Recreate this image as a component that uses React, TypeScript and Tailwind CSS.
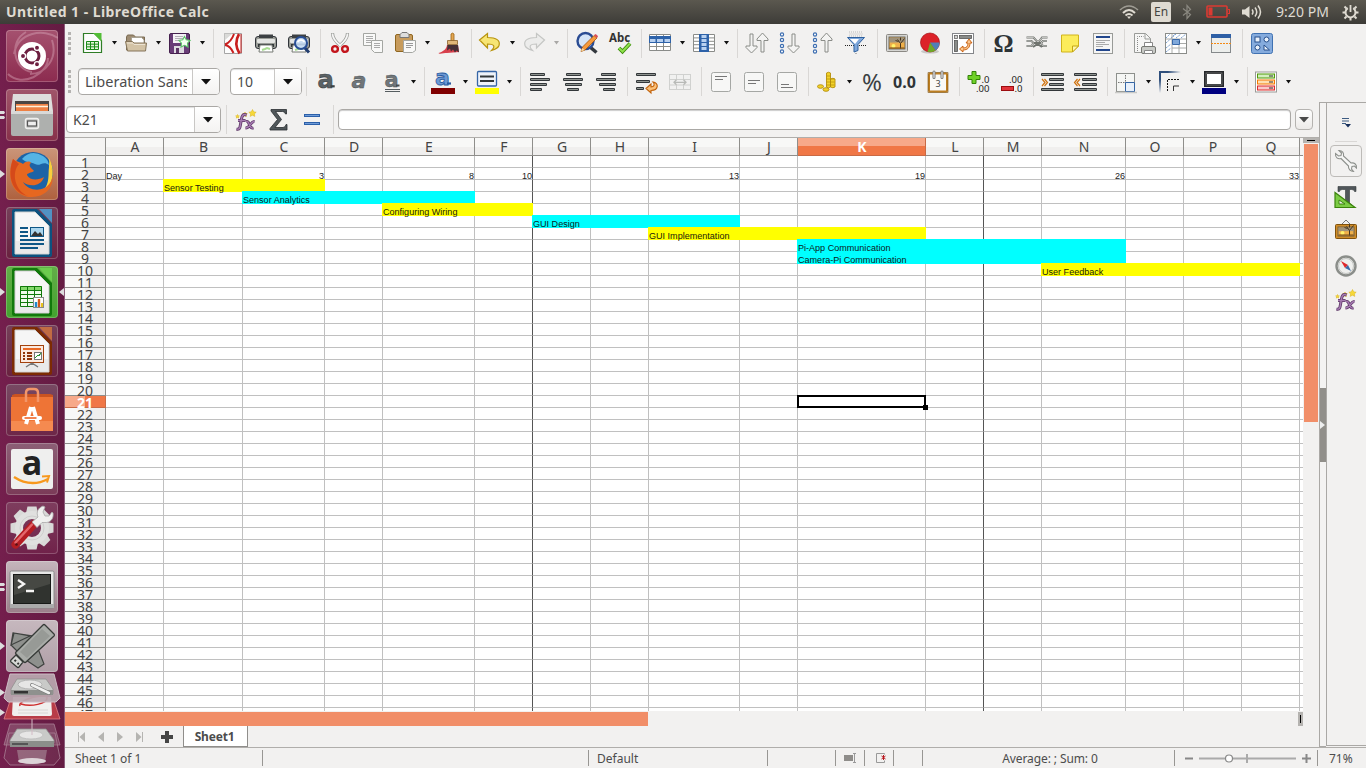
import React from "react";

type Kids = { children?: React.ReactNode };

/* ---------- toolbar icons, 24 x 24 ---------- */

function Svg({ children, s = 24 }: Kids & { s?: number }) {
  return (
    <svg width={s} height={s} viewBox="0 0 24 24" fill="none" className="shrink-0 overflow-visible">
      {children}
    </svg>
  );
}

const UI = "Noto Sans, Open Sans, sans-serif";

const SheetLines = ({ x, y, w, h, c, n = 4, m = 3 }: { x: number; y: number; w: number; h: number; c: string; n?: number; m?: number }) => (
  <g stroke={c} strokeWidth="1">
    {Array.from({ length: n + 1 }, (_, i) => (
      <path key={"h" + i} d={`M${x} ${y + (h * i) / n}h${w}`} />
    ))}
    {Array.from({ length: m + 1 }, (_, i) => (
      <path key={"v" + i} d={`M${x + (w * i) / m} ${y}v${h}`} />
    ))}
  </g>
);

const bars = (rows: number[][]) => (
  <g>
    {rows.map(([x, y, w], i) => (
      <g key={i}>
        <rect x={x} y={y} width={w} height="3" rx="1" fill="#33373a" />
        <rect x={x + 1} y={y + 1} width={w - 2} height="1" fill="#8f9490" />
      </g>
    ))}
  </g>
);

const Box = ({ y1, y2 }: { y1: number; y2: number }) => (
  <g>
    <rect x="2.5" y="2.5" width="19" height="19" rx="2" fill="#f7f7f6" stroke="#a5a7a4" />
    <path d={`M6 ${y1}h12M6 ${y2}h8`} stroke="#777" strokeWidth="1" />
  </g>
);

const ArrowDown = ({ x }: { x: number }) => (
  <path d={`M${x - 1.5} 3v12h-4v1.500l5.500 5.500 5.500-5.500v-1.500h-4v-12z`} fill="#f4f4f3" stroke="#8a8c88" />
);
const ArrowUp = ({ x }: { x: number }) => (
  <path d={`M${x - 1.5} 21v-11.500h-4v-1.500l5.500-6 5.500 6v1.500h-4v11.500z`} fill="#f4f4f3" stroke="#8a8c88" />
);

const Fx = () => (
  <g>
    <path d="M11 4l.8 1.500 1.600.2-1.200 1.200.3 1.600-1.500-.8-1.500.8.3-1.600-1.200-1.200 1.600-.2zM18.500 1.500l1.200 2.300 2.500.4-1.800 1.700.4 2.500-2.300-1.200-2.300 1.200.4-2.500-1.800-1.700 2.500-.4zM3.500 6.500l.6 1.200 1.300.2-1 .9.300 1.300-1.200-.6-1.200.6.3-1.300-1-.9 1.300-.2z" fill="#f6d83a" stroke="#d8b21a" strokeWidth=".5" />
    <path d="M12.500 7c-3.500-1.500-4.500 1-5 4l-1.500 8c-.3 1.800-1.500 2.500-3.500 2M4 12.500h7.500" stroke="#5c3566" strokeWidth="3" />
    <path d="M12.500 7c-3.500-1.500-4.500 1-5 4l-1.500 8c-.3 1.800-1.500 2.500-3.500 2M4 12.500h7.500" stroke="#a77cb2" strokeWidth="1.400" />
    <path d="M12 13.500c4-1.500 2.500 8 7.500 6.500M20.500 13.500c-4-.5-4 6.500-9 6.500" stroke="#5c3566" strokeWidth="2.800" />
    <path d="M12 13.500c4-1.500 2.500 8 7.500 6.500M20.500 13.500c-4-.5-4 6.500-9 6.500" stroke="#a77cb2" strokeWidth="1.300" />
  </g>
);

const Sunset = ({ frame, edge = "#8b8984", x = 1.5, y = 3.5, w = 21, h = 17 }: { frame: string; edge?: string; x?: number; y?: number; w?: number; h?: number }) => (
  <g>
    <rect x={x} y={y} width={w} height={h} rx="1" fill={frame} stroke={edge} />
    <rect x={x + 2.5} y={y + 2.5} width={w - 5} height={h - 5} fill="#efb04a" stroke="#55544f" strokeWidth=".8" />
    <rect x={x + 3} y={y + 3} width={w - 6} height={(h - 6) / 2.2} fill="#85898c" opacity=".75" />
    <circle cx={x + 7} cy={y + h - 5.500} r="2" fill="#fff36b" />
    <path d={`M${x + 14} ${y + h - 3}v-5l-3-4m3 4l4-5m-4 2v-3m-5 3l3 1`} stroke="#45341e" strokeWidth="1" />
    <path d={`M${x + 3} ${y + h - 3.5}h${w - 6}`} stroke="#744a12" strokeWidth="1" />
  </g>
);

const Printer = () => (
  <g>
    <rect x="1.500" y="5.500" width="21" height="12" rx="2.500" fill="#999c97" stroke="#30343a" />
    <rect x="5" y="3.500" width="14" height="3.500" fill="#3c4043" />
    <rect x="3" y="8" width="18" height="4" rx="1" fill="#e4e5e3" />
    <rect x="4" y="13" width="16" height="3" fill="#33383b" />
    <path d="M6 14h12l1 7H5z" fill="#fff" stroke="#777b75" />
    <path d="M8 19l3-1 2-1 3 1" stroke="#a8dc92" strokeWidth="2" />
  </g>
);

const icons: Record<string, React.ReactNode> = {
  calc: (
    <Svg>
      <path d="M3.500 2.500h11l7 7v12h-18z" fill="#fcfcfc" stroke="#2f7d26" strokeWidth="1.200" />
      <path d="M13 2h8.500v8.500z" fill="#52bd36" />
      <rect x="6.500" y="10.500" width="12" height="8" fill="#e5f6dc" />
      <SheetLines x={6.5} y={10.5} w={12} h={8} c="#198b17" n={3} />
    </Svg>
  ),
  open: (
    <Svg>
      <path d="M2.500 19V6l1-2h6l2 2h9v13z" fill="#9f8d73" stroke="#7a6a52" />
      <path d="M7.500 6.500h10l2.500 2.500v5H7.500z" fill="#fff" stroke="#a09a8c" strokeWidth=".8" />
      <path d="M1.500 10.500h7l1.500 1.500h12.500l-1 8h-18z" fill="#d3c3a6" stroke="#85755a" />
      <path d="M3 12h5.500l1.500 1.500h11" stroke="#ece3d2" />
    </Svg>
  ),
  save: (
    <Svg>
      <rect x="1.500" y="2.500" width="20" height="20" rx="1.500" fill="#693d78" stroke="#45204e" />
      <rect x="5" y="3" width="13" height="9" fill="#f5f2f6" />
      <path d="M7 5.500h8M7 7.500h8M7 9.500h5" stroke="#b5b0b8" />
      <rect x="6" y="15" width="10" height="7" fill="#dddbe0" />
      <rect x="8" y="17" width="3" height="5" fill="#5c3566" />
      <path d="M16.500 5.500l1.800 3.300 3.800.6-2.600 2.800.5 3.800-3.500-1.700-3.500 1.700.5-3.800-2.600-2.800 3.800-.6z" fill="#f4fff0" stroke="#5cc468" strokeWidth="1.100" />
    </Svg>
  ),
  pdf: (
    <Svg>
      <path d="M3.500 2.500h17v20h-17z" fill="#fdfdfd" stroke="#a5a5a5" />
      <path d="M3.500 2.500h8l-8 7z" fill="#dadad8" />
      <path d="M4 13.500c4-1.500 7-5 9-10.500M4 14c3.500.5 6.500 3.500 8.500 8" stroke="#c81f1f" strokeWidth="2" />
      <path d="M18 3c-3.500 6-3.500 13 .5 19.500" stroke="#c81f1f" strokeWidth="2.600" />
      <path d="M20 3v19" stroke="#c81f1f" strokeWidth="1" />
    </Svg>
  ),
  print: <Svg><Printer /></Svg>,
  preview: (
    <Svg>
      <Printer />
      <path d="M17 16l5 5.500" stroke="#223d6f" strokeWidth="3" />
      <circle cx="14" cy="12" r="6" fill="#c3daf4" fillOpacity=".85" stroke="#294f96" strokeWidth="2" />
      <path d="M10.500 11q3.500-4 7 0" stroke="#fff" strokeWidth="1.500" />
    </Svg>
  ),
  cut: (
    <Svg>
      <path d="M4.500 2c0 5 3 9 8.500 13M19.500 2c0 5-3 9-8.500 13" stroke="#9a9c98" strokeWidth="3.200" />
      <path d="M4.500 2.500c0 4.500 3 8.500 8.500 12.500M19.500 2.500c0 4.500-3 8.500-8.500 12.500" stroke="#f6f6f6" strokeWidth="1.700" />
      <circle cx="7" cy="18" r="2.900" stroke="#c3151c" strokeWidth="2.400" />
      <circle cx="17" cy="18" r="2.900" stroke="#c3151c" strokeWidth="2.400" />
    </Svg>
  ),
  copy: (
    <Svg>
      <path d="M2.500 2.500h12v12h-12z" fill="#f9f9f8" stroke="#a4a6a2" />
      <path d="M5 5.500h7M5 7.500h7M5 9.500h5M5 11.500h6" stroke="#aaa" />
      <path d="M10.500 9.500h11v12h-8l-3-3z" fill="#f9f9f8" stroke="#a4a6a2" />
      <path d="M13 12.500h6M13 14.500h6M13 16.500h6" stroke="#aaa" />
    </Svg>
  ),
  paste: (
    <Svg>
      <rect x="2.500" y="3.500" width="17" height="17" rx="1.500" fill="#c79b5c" stroke="#8f661f" />
      <path d="M7 3.500l2-2h5l2 2v3H7z" fill="#ddd" stroke="#777" />
      <path d="M10.500 9.500h12v10l-3 2h-9z" fill="#f9f9f8" stroke="#a4a6a2" />
      <path d="M13 12.500h7M13 14.500h7M13 16.500h5" stroke="#999" />
    </Svg>
  ),
  brush: (
    <Svg>
      <path d="M13 3q1.500-1.800 3 0v7h-3z" fill="#e3a651" stroke="#9b6518" strokeWidth=".8" />
      <path d="M9.500 9.500h10v4h-10z" fill="#e0b678" stroke="#8a6128" strokeWidth=".8" />
      <path d="M9 14h11l1 7-12 1c-3 0-8 1.500-8.500 0 5-1.500 8-4 8.500-8z" fill="#d8404c" />
      <path d="M9.500 14H20l1 7.500-2.500-2-1.500 2-2-3-2 2-1-3-3 2z" fill="#463036" />
    </Svg>
  ),
  undo: (
    <Svg>
      <path d="M1.500 9l8-6.500v4c9 0 13 3 11.500 8-1 3-4 4-7.500 5 4-4 3-6.500-4-6.500v4z" fill="#f7e574" stroke="#b8940f" strokeWidth="1.200" />
    </Svg>
  ),
  redo: (
    <Svg>
      <path d="M22.500 9l-8-6.500v4c-9 0-13 3-11.500 8 1 3 4 4 7.500 5-4-4-3-6.500 4-6.500v4z" fill="#ececeb" stroke="#c5c6c4" strokeWidth="1.200" />
    </Svg>
  ),
  find: (
    <Svg>
      <path d="M15 16l6.500 5.500" stroke="#33383e" strokeWidth="3.500" />
      <circle cx="10.500" cy="10" r="8" fill="#d6e5f7" stroke="#2b4c93" strokeWidth="2.400" />
      <path d="M6 20.500l1.500-4.500L19 4.500l3 2.500L10 19z" fill="#f59a3d" stroke="#a65309" strokeWidth=".8" />
      <path d="M19 4.500l3 2.500 1-1.500q-.5-2-2.800-2.500z" fill="#db4f58" />
      <path d="M6 20.500l1.200-3.500 2.500 2z" fill="#f4d9a8" />
    </Svg>
  ),
  abc: (
    <Svg>
      <text x="1" y="11" fontSize="11.500" fontWeight="700" fontFamily={UI} fill="#333">Abc</text>
      <path d="M11 17l3.500 3.500 7.500-8" stroke="#3b8a0a" strokeWidth="3.800" />
      <path d="M11 17l3.500 3.500 7.500-8" stroke="#8ee04b" strokeWidth="2" />
    </Svg>
  ),
  rows: (
    <Svg>
      <rect x="1.500" y="3.500" width="21" height="16" fill="#fff" />
      <SheetLines x={1.5} y={3.5} w={21} h={16} c="#8a8c89" n={4} />
      <rect x="1" y="5" width="22" height="7" fill="#2d62a9" />
      <path d="M2 9.500h5.500M9 9.500h6M16.500 9.500H22" stroke="#b7d0f0" strokeWidth="3" />
    </Svg>
  ),
  cols: (
    <Svg>
      <rect x="1.500" y="3.500" width="21" height="17" fill="#fff" />
      <SheetLines x={1.5} y={3.5} w={21} h={17} c="#8a8c89" n={5} />
      <rect x="7" y="3" width="10" height="18" fill="#2d62a9" />
      <path d="M9.500 5.500h5M9.500 9.500h5M9.500 13.500h5M9.500 17.500h5" stroke="#b7d0f0" strokeWidth="2.800" />
    </Svg>
  ),
  sort: <Svg><ArrowDown x={6.5} /><ArrowUp x={17.5} /></Svg>,
  sortDown: (
    <Svg>
      <g stroke="#3c6db0" strokeWidth="1.200" fill="#fff">{[3.5, 9, 15, 20.5].map((y) => <circle key={y} cx="4" cy={y} r="1.600" />)}</g>
      <ArrowDown x={15.5} />
    </Svg>
  ),
  sortUp: (
    <Svg>
      <g stroke="#3c6db0" strokeWidth="1.200" fill="#fff">{[3.5, 9, 15, 20.5].map((y) => <circle key={y} cx="4" cy={y} r="1.600" />)}</g>
      <ArrowUp x={15.5} />
    </Svg>
  ),
  filter: (
    <Svg>
      <path d="M5 1h14M5.500 3h14M5 5h14" stroke="#bbb" strokeWidth="1" strokeDasharray="1 1" />
      <path d="M1 14.500h22" stroke="#222" strokeDasharray="1 1" />
      <path d="M3.500 6.500h17l-6.500 7v6l-4 1.500v-7.500z" fill="#7fa8dc" stroke="#2f619f" />
      <path d="M6 8h9l-4 5z" fill="#fff" />
      <path d="M12 22v2" stroke="#777" strokeDasharray="1 1" />
    </Svg>
  ),
  image: <Svg><Sunset frame="#d6d6d3" /></Svg>,
  chart: (
    <Svg>
      <ellipse cx="12" cy="20.500" rx="9" ry="2" fill="#c9c9c7" />
      <circle cx="12" cy="11.500" r="9.500" fill="#dc2229" stroke="#a40f12" strokeWidth=".7" />
      <path d="M12 11.500h9.500c0 4-1.500 6-4 8z" fill="#517fb8" />
      <path d="M12 11.500l5.500 8c-3 1.800-5 1.800-8 1.200z" fill="#6fa82a" />
    </Svg>
  ),
  pivot: (
    <Svg>
      <rect x="1.500" y="2.500" width="21" height="20" fill="#fff" stroke="#84868a" />
      <rect x="3.500" y="4.500" width="3" height="3" fill="#d4d4d2" stroke="#666" strokeWidth=".8" />
      <rect x="8.500" y="4.500" width="12" height="3" fill="#8a8c89" stroke="#555" strokeWidth=".8" />
      <rect x="3.500" y="9.500" width="3" height="11" fill="#8a8c89" stroke="#555" strokeWidth=".8" />
      <path d="M8.500 18l3.500-3v2c3.500 0 5-1.500 5-5h-2l3-4 3 4h-2c0 4.500-2.500 7-7 7v2z" fill="#fbc78e" stroke="#c55a09" strokeWidth=".9" />
    </Svg>
  ),
  omega: (
    <Svg>
      <text x="11.500" y="21" textAnchor="middle" fontSize="25" fontWeight="700" fontFamily="Liberation Serif, serif" fill="#2d3336">Ω</text>
    </Svg>
  ),
  link: (
    <Svg>
      <path d="M1.500 6.500h7l3.500 4h2l3-4h5.500M1.500 10h5l2 2-2 3h-5M22 10h-4l-2 2 2 3h4M8.500 12h7M8 16l3-2h3l3 2" stroke="#70746f" strokeWidth="2" />
      <path d="M1.500 6.500h7l3.500 4h2l3-4h5.500M1.500 10h5l2 2-2 3h-5M22 10h-4l-2 2 2 3h4" stroke="#d5d6d4" strokeWidth=".8" />
    </Svg>
  ),
  note: (
    <Svg>
      <path d="M3.500 4h17v11l-6 6h-11z" fill="#fcec5b" stroke="#d0b31b" />
      <path d="M14.500 21v-6h6z" fill="#fff6a8" stroke="#c4a613" />
    </Svg>
  ),
  header: (
    <Svg>
      <rect x="2.500" y="2.500" width="19" height="20" fill="#f5f5f4" stroke="#999b98" />
      <path d="M5 6h14M5 19h14" stroke="#22468c" strokeWidth="2.200" />
      <path d="M5 9.500h14M5 11.500h9M5 13.500h13M5 15.500h7" stroke="#aaa" />
    </Svg>
  ),
  printArea: (
    <Svg>
      <path d="M2.500 2.500h11l5 5v14h-16z" fill="#f6f6f5" stroke="#999b98" />
      <path d="M13 2.500v5.500h5.500" stroke="#999b98" />
      <path d="M5.500 20V5.500h6" stroke="#888" strokeDasharray="1 1" />
      <path d="M12.500 11.500h8v5h-8z" fill="#fff" stroke="#888" />
      <rect x="9.500" y="15.500" width="14" height="7" rx="1.500" fill="#c9cbc7" stroke="#777974" />
      <path d="M12.500 19.500h8v3h-8z" fill="#fff" stroke="#888" />
    </Svg>
  ),
  freeze: (
    <Svg>
      <rect x="1.500" y="2.500" width="21" height="20" fill="#fff" stroke="#8a8c89" />
      <path d="M2 7l4-4M2 12l10-9M2 17l5-4M2 21l5-4M12 7l5-4M17 7l5-4M7 7l4-4" stroke="#7ba0d0" strokeDasharray="2 1" />
      <path d="M8 3v19M2 8h20M15 8v14M8 12.500h14M8 17h14" stroke="#aaacaa" />
      <path d="M8.500 8.500h7v5h-7z" fill="#7fa8da" stroke="#3a69a8" />
    </Svg>
  ),
  split: (
    <Svg>
      <rect x="2.500" y="3.500" width="19" height="18" fill="#eceeec" stroke="#85898b" />
      <path d="M2 5h20" stroke="#2e5fa5" strokeWidth="4" />
      <path d="M2 12.500h20" stroke="#f48a13" strokeWidth="1" strokeDasharray="2 1" />
    </Svg>
  ),
  shapes: (
    <Svg>
      <rect x="1.500" y="2.500" width="21" height="20" rx="2" fill="#85abdd" stroke="#4072b2" />
      <g fill="#e9f1fb" stroke="#264f8c" strokeWidth="1">
        <rect x="5" y="6" width="5" height="5" />
        <circle cx="16.500" cy="8.500" r="2.500" />
        <circle cx="7.500" cy="16.500" r="2.500" />
        <path d="M14 14v5h5.500z" />
      </g>
    </Svg>
  ),
  bold: (
    <Svg>
      <text x="11.500" y="17.500" textAnchor="middle" fontSize="24" fontWeight="700" fontFamily="DejaVu Sans, sans-serif" fill="#5c6366" stroke="#3a4043" strokeWidth=".6">a</text>
      <path d="M16.500 16.300h4.200" stroke="#3a4043" strokeWidth="2.200" />
    </Svg>
  ),
  italic: (
    <Svg>
      <text x="12" y="17.500" textAnchor="middle" fontSize="22" fontWeight="700" fontStyle="italic" fontFamily="DejaVu Sans, sans-serif" fill="#70767a" stroke="#454b4e" strokeWidth=".4">a</text>
    </Svg>
  ),
  underline: (
    <Svg>
      <text x="12.500" y="16.500" textAnchor="middle" fontSize="21" fontWeight="700" fontFamily="DejaVu Sans, sans-serif" fill="#70767a" stroke="#454b4e" strokeWidth=".4">a</text>
      <path d="M17 15.500h3.500" stroke="#454b4e" strokeWidth="2" />
      <path d="M6 19.500h15M6 21.500h15" stroke="#565d60" strokeWidth="1.100" />
    </Svg>
  ),
  fontColor: (
    <Svg>
      <text x="11.500" y="14.500" textAnchor="middle" fontSize="22" fontWeight="700" fontFamily="DejaVu Sans, sans-serif" fill="#6b99d4" stroke="#295a9f" strokeWidth=".8">a</text>
      <path d="M16 13.500h4" stroke="#295a9f" strokeWidth="2.200" />
      <rect x="0" y="18" width="24" height="6" fill="#800000" />
    </Svg>
  ),
  highlight: (
    <Svg>
      <rect x="2.500" y="1.500" width="19" height="14.500" rx="1" fill="#eef3fa" stroke="#3565a6" strokeWidth="1.300" />
      <path d="M5 6.500h14M5 11h14" stroke="#33393b" strokeWidth="2" />
      <rect x="0" y="18" width="24" height="6" fill="#ff0" />
    </Svg>
  ),
  left: <Svg>{bars([[2, 3, 15], [2, 8, 20], [2, 13, 17], [2, 18, 12]])}</Svg>,
  center: <Svg>{bars([[5, 3, 15], [2, 8, 20], [4, 13, 17], [6, 18, 12]])}</Svg>,
  right: <Svg>{bars([[7, 3, 15], [2, 8, 20], [5, 13, 17], [9, 18, 12]])}</Svg>,
  wrap: (
    <Svg>
      {bars([[1, 3, 20], [1, 10, 14], [1, 17, 8]])}
      <path d="M11 18.500l5-4.500v3c3.500 0 4-3 2-5 6 .5 6 8.500-2 8.500v2.500z" fill="#fbc078" stroke="#c3630b" strokeWidth="1.100" />
    </Svg>
  ),
  merge: (
    <Svg>
      <rect x="1.500" y="4.500" width="21" height="15" fill="#f1f1f0" stroke="#d0d1cf" />
      <path d="M8.500 4v6M15.500 4v6M8.500 15v5M15.500 15v5M1 9.500h22M1 15h22" stroke="#d0d1cf" />
      <path d="M6 12.300h12M8.500 9.800l-2.500 2.500 2.500 2.500M15.500 9.800l2.500 2.500-2.500 2.500" stroke="#b8bab7" strokeWidth="1.300" />
    </Svg>
  ),
  top: <Svg><Box y1={6.5} y2={9.5} /></Svg>,
  middle: <Svg><Box y1={10.5} y2={13.5} /></Svg>,
  bottom: <Svg><Box y1={17.5} y2={14.5} /></Svg>,
  currency: (
    <Svg>
      <g fill="#f2d229" stroke="#b58f0c" strokeWidth=".9">
        <path d="M11.500 3q2-1.500 4 0v14q-2 1.500-4 0zM15.500 9q2.500-1.500 4.500 0v8q-2 1.500-4.500 0z" />
        <ellipse cx="5.500" cy="16.500" rx="3" ry="1.800" />
        <ellipse cx="11" cy="19.500" rx="3" ry="1.800" />
      </g>
      <path d="M11.500 6h4M11.500 9h8M11.500 12h8M11.500 15h8" stroke="#b58f0c" strokeWidth=".7" />
    </Svg>
  ),
  percent: (
    <Svg>
      <text x="12" y="20.500" textAnchor="middle" fontSize="24" fontFamily={UI} fill="#3a4043">%</text>
    </Svg>
  ),
  number: (
    <Svg>
      <text x="11.500" y="17.500" textAnchor="middle" fontSize="16" fontWeight="700" fontFamily={UI} fill="#2f3436">0.0</text>
    </Svg>
  ),
  date: (
    <Svg>
      <rect x="3" y="3.500" width="18" height="18" rx="1" fill="#faf9f6" stroke="#bd7f22" strokeWidth="2" />
      <path d="M2 2.500h20v20h-20z" stroke="#7d5211" strokeWidth=".6" />
      <text x="12" y="16.500" textAnchor="middle" fontSize="9" fontFamily={UI} fill="#444">3</text>
      <path d="M8 2v5.500M16 2v5.500" stroke="#777" strokeWidth="3" strokeLinecap="round" />
      <path d="M8 2v5.500M16 2v5.500" stroke="#ddd" strokeWidth="1.300" strokeLinecap="round" />
    </Svg>
  ),
  addDec: (
    <Svg>
      <path d="M5 1.500h4v4h4v4H9v4H5v-4H1v-4h4z" fill="#6fd128" stroke="#348208" />
      <text x="14.500" y="12.500" fontSize="9.500" fontFamily={UI} fill="#222">.0</text>
      <text x="9" y="22" fontSize="9.500" fontFamily={UI} fill="#222">.00</text>
    </Svg>
  ),
  delDec: (
    <Svg>
      <rect x="1.500" y="16.500" width="12" height="4" fill="#e2343a" stroke="#9c0d10" />
      <text x="9" y="12.500" fontSize="9.500" fontFamily={UI} fill="#222">.00</text>
      <text x="14.500" y="22" fontSize="9.500" fontFamily={UI} fill="#222">.0</text>
    </Svg>
  ),
  indent: (
    <Svg>
      {bars([[0, 3, 23], [8, 8, 15], [8, 13, 15], [0, 18, 23]])}
      <path d="M1 9l3 3.500-3 3.500M3.500 9l3 3.500-3 3.500" stroke="#d0730f" strokeWidth="1.200" />
    </Svg>
  ),
  outdent: (
    <Svg>
      {bars([[0, 3, 23], [8, 8, 15], [8, 13, 15], [0, 18, 23]])}
      <path d="M6 9l-3 3.500 3 3.500M3.500 9l-3 3.500 3 3.500" stroke="#d0730f" strokeWidth="1.200" />
    </Svg>
  ),
  border: (
    <Svg>
      <rect x="2.500" y="3.500" width="18" height="18" fill="#f5f6f4" stroke="#8d908c" />
      <path d="M4 12.500h8M11.500 5v8" stroke="#777" strokeDasharray="1.500 1" />
      <path d="M11.500 12.500h9v9h-9z" fill="#e8f0fa" stroke="#3465a4" />
      <path d="M1 22.500h22" stroke="#c9c9c7" strokeWidth="1.500" />
    </Svg>
  ),
  lineStyle: (
    <Svg>
      <defs>
        <linearGradient id="fadeX" x1="0" x2="1"><stop offset=".4" stopColor="#2f4f7c" /><stop offset="1" stopColor="#2f4f7c" stopOpacity="0" /></linearGradient>
        <linearGradient id="fadeY" x1="0" x2="0" y1="0" y2="1"><stop offset=".4" stopColor="#2f4f7c" /><stop offset="1" stopColor="#2f4f7c" stopOpacity="0" /></linearGradient>
      </defs>
      <rect x="1" y="1" width="22" height="2" fill="url(#fadeX)" />
      <rect x="1" y="1" width="2" height="22" fill="url(#fadeY)" />
      <path d="M9.500 21V9.500H22" stroke="#111" strokeWidth="1" strokeDasharray="2 1" />
      <path d="M15.500 21v-5H21" stroke="#333" strokeWidth="1" />
    </Svg>
  ),
  lineColor: (
    <Svg>
      <rect x="3.500" y="2.500" width="17" height="13" fill="#fff" stroke="#26282a" strokeWidth="3" />
      <rect x="4" y="3" width="16" height="12" stroke="#777" strokeWidth=".8" />
      <rect x="0" y="18" width="24" height="6" fill="#000080" />
    </Svg>
  ),
  cond: (
    <Svg>
      <rect x="1.500" y="2" width="21" height="20" fill="#fff" stroke="#999b98" />
      <rect x="3.500" y="4" width="17" height="4" fill="#d3efc0" stroke="#4e9a06" />
      <rect x="3.500" y="10" width="17" height="4" fill="#fde0b4" stroke="#f57900" />
      <rect x="3.500" y="16" width="17" height="4" fill="#f9c9c9" stroke="#dd2a2a" />
      <path d="M15 6h4M15 12h4M15 18h4" stroke="#333" />
    </Svg>
  ),
  fx: <Svg><Fx /></Svg>,
  sigma: (
    <Svg>
      <path d="M4 1.500h15.500v4.500h-1q-.5-2.500-3-2.500H8.500l6 8-6.500 8h8q2.500 0 3-3h1v5.500H3v-1.500l7.500-9L4 3z" fill="#50575a" stroke="#2a2f31" strokeWidth=".8" />
    </Svg>
  ),
  equals: (
    <Svg>
      <path d="M4 7.500h16M4 15.500h16" stroke="#2c60a9" strokeWidth="3" />
      <path d="M5 7.500h14M5 15.500h14" stroke="#6f9cd8" />
    </Svg>
  ),
};

const Grip = () => (
  <div className="ml-[3px] flex w-[3px] flex-col gap-[2px]">
    {[0, 1, 2, 3, 4].map((i) => <div key={i} className="h-[3px] bg-[#b4b2b0]" />)}
  </div>
);
const Sep = () => (
  <div className="flex w-2 shrink-0 justify-center pl-px">
    <div className="h-[29px] w-px bg-[#d9d7d5]" />
  </div>
);
const Tri = ({ dim }: { dim?: boolean }) => (
  <svg width="5" height="4" viewBox="0 0 5 4" className="shrink-0">
    <path d="M0 0h5L2.500 3.500z" fill={dim ? "#a9a8a6" : "#111"} />
  </svg>
);
/* "name" is a plain button, "name+" has a drop-down arrow, "|" is a separator */
const Tools = ({ list }: { list: string }) => (
  <>
    {list.split(" ").map((t, i) =>
      t === "|" ? (
        <Sep key={i} />
      ) : t.endsWith("+") ? (
        <div key={i} className="flex w-11 shrink-0 items-center gap-[8px] pl-[3px]">
          {icons[t.slice(0, -1)]}
          <Tri dim={t === "redo+"} />
        </div>
      ) : (
        <div key={i} className="flex w-[33px] shrink-0 items-center pl-[4px]">{icons[t]}</div>
      )
    )}
  </>
);

const BigTri = ({ c = "#111" }: { c?: string }) => (
  <svg width="10" height="6" viewBox="0 0 10 6"><path d="M0 0h10L5 5.500z" fill={c} /></svg>
);
const Combo = ({ text, className, btn }: { text: string; className: string; btn: string }) => (
  <div className={"flex h-[27px] shrink-0 overflow-hidden rounded-[4px] border border-[#aaa8a5] bg-white shadow-[inset_0_1px_1px_#ddd] " + className}>
    <div className="flex min-w-0 flex-1 items-center pl-[6px]">
      <div className="overflow-hidden whitespace-nowrap text-[#4c4c4c]">{text}</div>
    </div>
    <div className={"flex shrink-0 items-center justify-center border-l border-[#c9c7c5] bg-gradient-to-b from-white to-[#f4f3f2] " + btn}><BigTri /></div>
  </div>
);

/* ---------- launcher ---------- */

const OfficePage = ({ a, b, children }: { a: string; b: string } & Kids) => (
  <svg width="52" height="52" viewBox="0 0 52 52">
    <path d="M8 2h23l15 15v31q0 2-2 2H8q-2 0-2-2V4q0-2 2-2z" fill={b} />
    <path d="M33 2h13v14z" fill={a} opacity=".85" />
    <path d="M9 5h20l14 14v28H9z" fill="#f6f6f6" stroke="#d0d0d0" />
    <path d="M9 34h34v13H9z" fill="#dedede" opacity=".5" />
    {children}
  </svg>
);
const Big = ({ children }: Kids) => <svg width="52" height="52" viewBox="0 0 52 52" fill="none">{children}</svg>;

const teeth = [0, 45, 90, 135, 180, 225, 270, 315];

const tiles: { bg: string; marks?: number; icon: React.ReactNode }[] = [
  {
    bg: "bg-gradient-to-b from-[#a5516f] to-[#8c2b4f]",
    icon: (
      <Big>
        <path d="M52 8C38-2 12 2 8 24M2 44C16 58 42 44 42 28M20 2C2 12 8 40 26 42M46 10c6 18-6 34-22 34" stroke="#d8a3b5" strokeOpacity=".45" strokeWidth="2" />
        <circle cx="26" cy="26" r="14" fill="#fff" />
        <circle cx="26" cy="26" r="7" stroke="#6d1f40" strokeWidth="3" />
        <g stroke="#fff" strokeWidth="1.300" fill="#6d1f40">
          <circle cx="17" cy="26" r="2.600" /><circle cx="31" cy="17.800" r="2.600" /><circle cx="31" cy="34.200" r="2.600" />
        </g>
      </Big>
    ),
  },
  {
    bg: "bg-gradient-to-b from-[#a0556a] to-[#87304a]", marks: 2,
    icon: (
      <Big>
        <path d="M7 5h38l2 17H5z" fill="#dededc" />
        <path d="M9 12h34v11H9z" fill="#4b4643" />
        <path d="M10 15h32v7H10z" fill="#ed8144" /><path d="M10 17.500h32" stroke="#fff2da" strokeWidth="1.300" />
        <path d="M5 22h42v23q0 2-2 2H7q-2 0-2-2z" fill="#aeb0ae" />
        <path d="M5 22h42v3H5z" fill="#d9d9d8" />
        <rect x="19.500" y="29.500" width="13" height="10" rx="2" fill="#c4c5c3" stroke="#efefee" strokeWidth="1.500" />
        <rect x="21.500" y="32" width="9" height="5" fill="#eee" stroke="#555" strokeWidth="1.200" />
      </Big>
    ),
  },
  {
    bg: "bg-gradient-to-b from-[#cb9579] to-[#ae613e]", marks: 1,
    icon: (
      <Big>
        <circle cx="27" cy="24" r="20" fill="#1c63a6" />
        <path d="M16 11q9-10 21-3 5 3 6 9c-6-5-9 2-14-1s-7 0-13-5z" fill="#55b4e5" />
        <path d="M42 9c7 9 7 27-5 34 7-8 5-16 6-24 0-4 1-6-1-10z" fill="#f9cf3c" />
        <path d="M7 11c3 3 6 2 10 5 3-3 7-3 8-1-4 3 2 6 3 8-3 2-7 2-7 4 3 6 12 5 17 2-3 10-15 10-21 5 5 9 20 11 27 1 4-5 3-12 1-16 6 16-3 30-19 30C8 49-1 31 7 11z" fill="#e66720" />
        <path d="M7 11C1 28 6 45 22 48 9 43 5 25 13 16z" fill="#d54a1a" />
      </Big>
    ),
  },
  {
    bg: "bg-gradient-to-b from-[#754059] to-[#69213f]",
    icon: (
      <OfficePage a="#4ba1d6" b="#0c527f">
        <path d="M14 21h8M14 25h8M14 29h8M14 33h24M14 37h24M14 41h18" stroke="#0f5786" strokeWidth="2" />
        <rect x="24.500" y="20.500" width="13" height="9" fill="#abd6ee" stroke="#0f5786" />
        <path d="M25 29l4-5 3 3 2-2 3 4z" fill="#333" />
      </OfficePage>
    ),
  },
  {
    bg: "bg-gradient-to-b from-[#63ae48] to-[#43a22f]", marks: 3,
    icon: (
      <OfficePage a="#6ed150" b="#11790b">
        <rect x="14" y="20" width="22" height="20" fill="#f1fbec" />
        <path d="M14 20h22v5H14z" fill="#84d96c" />
        <SheetLines x={14.5} y={20.5} w={21} h={20} c="#11790b" n={5} m={3} />
        <rect x="27.500" y="31.500" width="10" height="10" fill="#fff" stroke="#888" />
        <path d="M30 41v-5" stroke="#2089ca" strokeWidth="2.400" /><path d="M33 41v-8" stroke="#d65a18" strokeWidth="2.400" /><path d="M36 41v-4" stroke="#e7c31b" strokeWidth="2" />
      </OfficePage>
    ),
  },
  {
    bg: "bg-gradient-to-b from-[#754059] to-[#69213f]",
    icon: (
      <OfficePage a="#cf743f" b="#7c2b03">
        <rect x="14.500" y="20.500" width="23" height="17" fill="#fbeae0" stroke="#a3420d" />
        <path d="M17 24h18" stroke="#ea6a26" strokeWidth="2" />
        <path d="M17 28h2M17 31h2M17 34h2M21 28h5M21 31h5M21 34h5" stroke="#8f3509" strokeWidth="2" />
        <rect x="28.500" y="27.500" width="7" height="7" fill="#fff" stroke="#777" /><path d="M29 33l3-3 1 1 2-3" stroke="#259a2b" />
        <path d="M26 38v2M26 38l-6 4M26 38l6 4" stroke="#777" strokeWidth="1.500" />
      </OfficePage>
    ),
  },
  {
    bg: "bg-gradient-to-b from-[#774963] to-[#6d2648]",
    icon: (
      <Big>
        <path d="M6 11l3-1h35l3 1v3H6z" fill="#c95321" />
        <path d="M5 13h42v34H5z" fill="#ee7436" /><path d="M5 37h42v10H5z" fill="#f58a50" />
        <path d="M20 18v-9q0-4 4-4h4q4 0 4 4v9" stroke="#f2966a" strokeWidth="2.500" />
        <path d="M25 23l-5 17M27 23l5 17" stroke="#fff" strokeWidth="4" />
        <path d="M18 34h16" stroke="#fff" strokeWidth="4" strokeLinecap="round" /><path d="M18.500 34h12" stroke="#ee5a18" strokeWidth="1.500" />
      </Big>
    ),
  },
  {
    bg: "bg-gradient-to-b from-[#8c5f76] to-[#7b3b58]",
    icon: (
      <Big>
        <rect x="5" y="6" width="42" height="40" rx="2" fill="#efefee" />
        <text x="26" y="32" textAnchor="middle" fontSize="34" fontWeight="700" fontFamily="Open Sans, sans-serif" fill="#222">a</text>
        <path d="M8 34q17 11 34 2" stroke="#f7981d" strokeWidth="2.500" /><path d="M36 33.500l7-.5-2 6.500" stroke="#f7981d" strokeWidth="2" />
      </Big>
    ),
  },
  {
    bg: "bg-gradient-to-b from-[#7e3d5e] to-[#70224a]",
    icon: (
      <Big>
        <g fill="#d9d9d8">
          {teeth.map((a) => <path key={a} d="M20 11l1.500-6.500h9L32 11z" transform={`rotate(${a} 26 26)`} />)}
        </g>
        <circle cx="26" cy="26" r="13" stroke="#e0e0df" strokeWidth="8" />
        <circle cx="26" cy="26" r="12" stroke="#cfcfce" strokeWidth="1" />
        <path d="M9.500 42.500L28 22" stroke="#b51d23" strokeWidth="8" strokeLinecap="round" />
        <path d="M9.500 40.500L26 22.500" stroke="#e4666b" strokeWidth="2.500" strokeLinecap="round" />
        <circle cx="10.500" cy="42.500" r="1.300" fill="#571015" />
        <path d="M26 20l6-5c-2-5 0-9 5-11l2 1-2 5 2 4 4 0 3-4 1 1c1 6-3 10-8 9.500l-3 0-5 5z" fill="#f0f0ef" stroke="#aaa" strokeWidth=".8" />
      </Big>
    ),
  },
  {
    bg: "bg-gradient-to-b from-[#c5b6bc] to-[#9b7f8a]", marks: 2,
    icon: (
      <Big>
        <rect x="4" y="10" width="44" height="37" rx="1.500" fill="#e7e7e6" stroke="#888" />
        <path d="M4 43h44v4H4z" fill="#aaa" />
        <rect x="7.500" y="13.500" width="37" height="29" fill="#30332f" stroke="#171917" />
        <path d="M8 14h36v9L8 34z" fill="#555752" opacity=".6" />
        <path d="M12 19l6 4-6 4" stroke="#f5f5f4" strokeWidth="2.300" /><path d="M20 30h8" stroke="#f5f5f4" strokeWidth="2.300" />
      </Big>
    ),
  },
  {
    bg: "bg-gradient-to-b from-[#c6b8be] to-[#b09fa7]", marks: 1,
    icon: (
      <Big>
        <path d="M8 13l16 3-19 9zM5 25l2-12 20 3 11 28-6 4-12-8z" fill="#8e908d" stroke="#3f4240" strokeWidth="1.200" />
        <path d="M37 5q1-1 2 0l9 9q1 1 0 2L20 42q-1 1-2 0l-8-8q-1-1 0-2z" fill="#a9aca8" stroke="#373b38" strokeWidth="1.300" />
        <path d="M36 9l8 7-23 22-7-6z" fill="#979a96" />
        <path d="M10 35l7 7-4 5q-1 1-2 0l-6-5q-1-1 0-2z" fill="#d5d6d3" stroke="#373b38" strokeWidth="1.300" />
        <path d="M8.500 40l1.500 1.300M11.500 43l1.300 1.200" stroke="#333" strokeWidth="2" />
      </Big>
    ),
  },
];

const Marks = ({ n }: { n?: number }) => (
  <div className="flex w-[6px] shrink-0 flex-col justify-center gap-[2px]">
    {n === 2 && [0, 1].map((i) => (
      <svg key={i} width="5" height="3" viewBox="0 0 5 3"><path d="M0 0h4l1 1.500-1 1.500H0z" fill="#ddd" /></svg>
    ))}
    {(n === 1 || n === 3) && <svg width="5" height="8" viewBox="0 0 5 8"><path d="M0 0l5 4-5 4z" fill="#ddd" /></svg>}
  </div>
);

const Launcher = () => (
  <div className="flex w-[65px] shrink-0 flex-col overflow-hidden border-r border-[#8b5c7a] bg-gradient-to-r from-[#741f4d] to-[#641b42] pt-[6px]">
    {tiles.map((t, i) => (
      <div key={i} className="mb-[7px] flex h-[52px] shrink-0">
        <Marks n={t.marks} />
        <div className={"h-[52px] w-[52px] overflow-hidden rounded-[4px] shadow-[inset_0_0_0_1px_rgba(255,255,255,0.22)] " + t.bg}>{t.icon}</div>
        {t.marks === 3 && (
          <div className="flex flex-1 items-center justify-end"><svg width="5" height="8" viewBox="0 0 5 8"><path d="M5 0L0 4l5 4z" fill="#ddd" /></svg></div>
        )}
      </div>
    ))}
    <svg width="64" height="95" viewBox="0 0 64 95" fill="none" className="-mt-[6px] shrink-0">
      <path d="M4 46h56L54 28H10z" fill="#b83c48" stroke="#df8288" strokeWidth=".8" />
      <path d="M13 24h38l1 17q0 2-2 2H14q-2 0-2-2z" fill="#f1efee" />
      <path d="M20 33c-3-6 27-14 27-8s-16 9-26 6" stroke="#ce2d2d" strokeWidth="1.500" />
      <path d="M18 37h30M18 40h30" stroke="#d8d6d5" />
      <path d="M10 1h44l6 24-4 4H8l-4-4z" fill="#b8a5ae" fillOpacity=".95" stroke="#cdbcc5" />
      <path d="M17 6h29l7 10v5H11v-5z" fill="#c9cac8" stroke="#8f918e" strokeWidth=".8" />
      <path d="M11 17h42v5H11z" fill="#8f918e" /><path d="M14 18h14v2.500H14z" fill="#333" />
      <ellipse cx="30" cy="11.500" rx="12" ry="4.500" fill="#e6e6e5" stroke="#aaa" strokeWidth=".8" />
      <path d="M32 12l17 8" stroke="#777" strokeWidth="4" strokeLinecap="round" /><path d="M32 12l17 8" stroke="#f1f1f0" strokeWidth="2.600" strokeLinecap="round" />
      <path d="M10 51h44l6 21H4z" fill="#93607a" fillOpacity=".6" stroke="#a87f94" strokeWidth=".8" />
      <path d="M17 77h30l-2 12q-13 4-26 0z" fill="#a98d9a" fillOpacity=".7" />
      <path d="M9 60h46l5 25-6 7H10l-6-7z" fill="#8b5870" fillOpacity=".25" stroke="#a87f94" strokeWidth=".8" />
      <path d="M17 56h29l8 11v3H10v-3z" fill="#c9cac8" stroke="#8f918e" strokeWidth=".8" /><path d="M10 68h44v6H10z" fill="#8b8e8a" /><path d="M12 70h16v2H12z" fill="#555" />
      <ellipse cx="31" cy="62" rx="12" ry="4" fill="#e6e6e5" stroke="#bbb" strokeWidth=".8" />
      <path d="M32 46v16" stroke="#d3bac5" />
      <ellipse cx="32" cy="88" rx="14" ry="3" fill="#ddd3d8" />
      <path d="M0 16l5 3.500-5 3.500zM0 36l5 3.500-5 3.500z" fill="#ddd" />
    </svg>
  </div>
);

/* ---------- sheet ---------- */

const cols: [string, number][] = [
  ["A", 58], ["B", 79], ["C", 82], ["D", 58], ["E", 92], ["F", 58], ["G", 58], ["H", 58], ["I", 91],
  ["J", 58], ["K", 128], ["L", 58], ["M", 58], ["N", 84], ["O", 58], ["P", 58], ["Q", 58],
];
const days: Record<string, string> = { C: "3", E: "8", F: "10", I: "13", K: "19", N: "26", Q: "33" };
const tasks: Record<number, [string, string, string, "y" | "c"]> = {
  3: ["B", "C", "Sensor Testing", "y"],
  4: ["C", "E", "Sensor Analytics", "c"],
  5: ["E", "F", "Configuring Wiring", "y"],
  6: ["G", "I", "GUI Design", "c"],
  7: ["I", "K", "GUI Implementation", "y"],
  8: ["K", "N", "Pi-App Communication", "c"],
  9: ["K", "N", "Camera-Pi Communication", "c"],
  10: ["N", "Q", "User Feedback", "y"],
};
const fills = {
  y: "border-[#ff0] bg-[#ff0] text-[#22220a] shadow-[-1px_0_0_#ff0,0_-1px_0_#ff0,-1px_-1px_0_#ff0]",
  c: "border-[#0ff] bg-[#0ff] text-[#0a2222] shadow-[-1px_0_0_#0ff,0_-1px_0_#0ff,-1px_-1px_0_#0ff]",
};

const Row = ({ n }: { n: number }) => {
  const cells: React.ReactNode[] = [];
  const task = tasks[n];
  for (let i = 0; i < cols.length; i++) {
    const [c, w] = cols[i];
    if (task && task[0] === c) {
      let total = 0;
      while (cols[i][0] !== task[1]) total += cols[i++][1];
      total += cols[i][1];
      cells.push(
        <div key={c} className={"relative h-3 shrink-0 border-r border-b pt-[2px] leading-[13px] whitespace-nowrap " + fills[task[3]]} style={{ width: total }}>
          <div className="relative z-10">{task[2]}</div>
        </div>
      );
      continue;
    }
    const dark = c === "F" || c === "L";
    cells.push(
      <div
        key={c}
        className={"relative h-3 shrink-0 border-r border-b border-b-[#c0c0c0] pt-[2px] leading-[13px] whitespace-nowrap " + (dark ? "border-r-[#555]" : "border-r-[#c0c0c0]")}
        style={{ width: w }}
      >
        {n === 2 && (c === "A" ? "Day" : <div className="text-right">{days[c]}</div>)}
        {n === 21 && c === "K" && (
          <div className="absolute -top-px -left-px z-10 h-[13px] w-[129px] border-2 border-black">
            <div className="absolute -right-[4px] -bottom-[4px] h-[5px] w-[5px] bg-black" />
          </div>
        )}
      </div>
    );
  }
  const on = n === 21;
  return (
    <div className="flex h-3 shrink-0">
      <div
        className={
          "flex h-3 w-[41px] shrink-0 items-center justify-center overflow-visible border-r border-b pt-[3px] text-[14px] leading-none " +
          (on
            ? "border-[#c96a45] bg-[linear-gradient(90deg,#f7a98a_50%,#f07746_50%)] font-bold text-white"
            : "border-[#8f8e8b] bg-[linear-gradient(90deg,#f8f8f7_50%,#f0efee_50%)] text-[#444]")
        }
      >
        {n}
      </div>
      {cells}
      <div className="h-3 flex-1 border-b border-[#c0c0c0]" />
    </div>
  );
};

const Sheet = () => (
  <div className="flex h-[573px] w-[1238px] flex-col overflow-hidden bg-white text-[#222]">
    <div className="flex h-[18px] shrink-0 text-[14px]">
      <div className="w-[41px] border-r border-b border-[#8f8e8b] bg-[#f4f3f2]" />
      {cols.map(([c, w]) => (
        <div
          key={c}
          className={
            "flex shrink-0 items-center justify-center border-r border-b pl-px leading-none " +
            (c === "K"
              ? "border-[#c96a45] bg-[linear-gradient(180deg,#f7a98a_47%,#f07746_47%)] font-bold text-white"
              : "border-[#8f8e8b] bg-[linear-gradient(180deg,#f8f8f7_50%,#f0efee_50%)] text-[#444]")
          }
          style={{ width: w }}
        >
          {c}
        </div>
      ))}
      <div className="flex-1 border-b border-[#8f8e8b] bg-[#f4f3f2]" />
    </div>
    <div className="flex flex-col font-['Liberation_Sans',Arial,sans-serif] text-[9.05px] [&>div>div:first-child]:font-['Noto_Sans',sans-serif]">
      {Array.from({ length: 47 }, (_, i) => <Row key={i} n={i + 1} />)}
    </div>
  </div>
);

/* ---------- frame ---------- */

const TitleBar = () => (
  <div className="flex h-6 shrink-0 items-center bg-gradient-to-b from-[#5b584f] to-[#3d3c38] text-[#dfdbd2]">
    <div className="flex-1 pl-[6px] text-[14px] leading-none font-bold tracking-[0.45px]">Untitled 1 - LibreOffice Calc</div>
    <svg width="20" height="16" viewBox="0 0 20 16" fill="none" stroke="#dfdbd2">
      <path d="M1 6q9-8 18 0" strokeWidth="1.600" opacity=".55" /><path d="M4 9q6-6 12 0" strokeWidth="2" /><path d="M6.500 11.500q3.500-3 7 0" strokeWidth="2" /><path d="M8 12.500h4L10 15z" fill="#dfdbd2" stroke="none" />
    </svg>
    <div className="ml-[12px] flex h-[20px] w-[20px] items-center justify-center rounded-[2px] bg-[#dfdbd2] text-[12px] text-[#45443f]">En</div>
    <svg className="ml-[11px]" width="10" height="16" viewBox="0 0 10 16" fill="none" stroke="#8b8981" strokeWidth="1.200"><path d="M1 4.500l7.500 6L5 14.500V1.500l3.500 4L1 11.500" /></svg>
    <svg className="ml-[14px]" width="24" height="14" viewBox="0 0 24 14" fill="none"><rect x="1" y="1" width="20" height="11" rx="1" stroke="#dd3a32" strokeWidth="1.600" /><path d="M22 4.500h1.500v4H22" stroke="#dd3a32" strokeWidth="1.200" /><rect x="2.500" y="2.500" width="4" height="8" fill="#dd3a32" /></svg>
    <svg className="ml-[11px]" width="21" height="16" viewBox="0 0 21 16" fill="none" stroke="#dfdbd2" strokeWidth="1.500"><path d="M1 5.500h3L8.500 2v12L4 10.500H1z" fill="#dfdbd2" stroke="none" /><path d="M11 5.500q2 2.500 0 5M14 3.500q3.500 4.500 0 9M17 1.500q5 6.500 0 13" /></svg>
    <div className="ml-[14px] w-[54px] text-[14px] leading-none tracking-[0.05px] whitespace-nowrap">9:20 PM</div>
    <svg className="mr-[7px] ml-[12px]" width="17" height="17" viewBox="0 0 17 17" fill="none" stroke="#dfdbd2">
      <path d="M5.800 4.200a5 5 0 1 0 5.400 0" strokeWidth="2" /><path d="M8.500 1v7" strokeWidth="1.800" />
      <path d="M2.500 2.500l2 2M14.500 2.500l-2 2M.5 8.500h3M13.500 8.500h3M2.500 14.500l2-2M14.500 14.500l-2-2M8.500 16.500v-3" strokeWidth="2" />
    </svg>
  </div>
);

const Sidebar = () => (
  <div className="flex h-[645px] w-[47px] shrink-0">
    <div className="flex w-[7px] flex-col border-t border-b border-l border-[#aaa8a5] bg-[#f4f3f2]">
      <div className="h-[285px]" />
      <div className="flex h-[74px] items-center bg-[#918f8a]"><svg width="5" height="8" viewBox="0 0 5 8"><path d="M0 0l5 4-5 4z" fill="#eee" /></svg></div>
    </div>
    <div className="flex h-[644px] flex-1 flex-col items-center border-t border-b border-l border-[#aaa8a5] pr-[2px]">
      <svg className="mt-[14px]" width="12" height="12" viewBox="0 0 12 12"><path d="M2 1.500h7M2 4h7M2 6.500h4" stroke="#3e5c82" strokeWidth="1" /><path d="M5 7h6L8 10.500z" fill="#172f5b" /></svg>
      <div className="mt-[12px] h-px w-[22px] bg-[#d9d7d5]" />
      <div className="mt-[3px] flex h-[32px] w-[32px] items-center justify-center rounded-[4px] border border-[#bdbbb8]">
        <Svg>
          <path d="M5 1.500l2.500 2.500-.5 2.500-2.500.500L1.500 4.500c-.5 4 2.500 6 5.500 5l7.500 7.500c-.5 3 2 5.500 5 5.500l-2-2.500.5-2.500 2.500-.5 2 2c.5-3.500-2-5.500-5.500-5L9.500 7C10 4 8.500 1.500 5 1.500z" fill="#f6f6f5" stroke="#8d908c" strokeWidth="1.100" />
        </Svg>
      </div>
      <div className="mt-[8px]"><Svg>
        <path d="M4 1.500h18v5h-1.500q0-2-3-2H15.500V18q0 1.500 2 1.500V21h-8v-1.500q2 0 2-1.500V4.500H8.500q-3 0-3 2H4z" fill="#50565a" stroke="#33393b" strokeWidth=".6" />
        <path d="M1 7.500v15h20z" fill="#7ccc45" stroke="#3b830c" strokeWidth="1.200" /><path d="M5 15v4h6z" fill="#f1f1f0" stroke="#3b830c" />
      </Svg></div>
      <div className="mt-[9px]"><Svg><path d="M8 6l4-4 4 4" stroke="#777" /><Sunset frame="#d18d27" edge="#80520e" y={6.5} h={14} /></Svg></div>
      <div className="mt-[12px]"><Svg>
        <circle cx="12" cy="12" r="9.500" fill="#eff0ee" stroke="#8b8e8a" strokeWidth="2.400" /><circle cx="12" cy="12" r="7.500" stroke="#c3c5c2" />
        <path d="M7 7l7 4-3 3z" fill="#e0282d" /><path d="M17 17l-6-3 3-3z" fill="#3b6aa9" />
      </Svg></div>
      <div className="mt-[10px]"><Svg><Fx /></Svg></div>
    </div>
  </div>
);

const NavTri = ({ d }: { d: string }) => (
  <svg width="9" height="12" viewBox="0 0 9 12"><path d={d} fill="#b5b4b1" /></svg>
);

const Divider = () => <div className="h-4 w-px shrink-0 bg-[#989693]" />;

export default function App() {
  return (
    <div className="flex h-[768px] w-[1366px] flex-col overflow-hidden bg-[#f2f1f0] font-['Noto_Sans',sans-serif] text-[#4c4c4c]">
      <TitleBar />
      <div className="flex min-h-0 flex-1">
        <Launcher />
        <div className="flex w-[1301px] flex-col">
          <div className="flex h-[38px] shrink-0 items-center">
            <Grip />
            <div className="w-[6px] shrink-0" />
            <Tools list="calc+ open+ save+ | pdf print preview | cut copy paste+ brush | undo+ redo+ | find abc | rows+ cols+ | sort sortDown sortUp filter | image chart pivot | omega link note header | printArea freeze+ split | shapes" />
          </div>
          <div className="flex h-10 shrink-0 items-center pb-px">
            <Grip />
            <Combo text="Liberation Sans" className="ml-[7px] w-[142px] text-[14.5px] [&>div:first-child]:pr-[5px]" btn="w-[27px]" />
            <Combo text="10" className="ml-[10px] w-[72px] text-[14px]" btn="w-[27px]" />
            <Tools list="| bold italic underline+ | fontColor+ highlight+ | left center right | wrap merge | top middle bottom | currency+ percent number date | addDec delDec | indent outdent | border+ lineStyle+ lineColor+ | cond+" />
          </div>
          <div className="flex">
            <div className="flex w-[1254px] flex-col">
              <div className="flex h-[36px] items-center border-b border-[#b0aeab]">
                <Combo text="K21" className="ml-px w-[155px] text-[14px]" btn="w-[26px]" />
                <div className="w-px" />
                <Tools list="| fx sigma equals |" />
                <div className="ml-px h-[21px] w-[953px] rounded-[4px] border border-[#aaa8a5] bg-white shadow-[inset_0_1px_1px_#ccc]" />
                <div className="ml-[4px] flex h-[21px] w-[18px] items-center justify-center rounded-[4px] border border-[#b5b3b0] bg-gradient-to-b from-white to-[#eceae8]"><BigTri c="#4a4a4a" /></div>
              </div>
              <div className="flex h-[574px]">
                <Sheet />
                <div className="flex w-4 flex-col">
                  <div className="flex h-[5px] items-center justify-center bg-[#b5b3b0]"><div className="h-px w-2 bg-black" /></div>
                  <div className="mt-px ml-[1px] h-[278px] w-[14px] bg-[#f18e68]" />
                </div>
              </div>
              <div className="flex h-[14px]">
                <div className="w-[583px] bg-[#f18e68]" />
                <div className="ml-[650px] flex w-[5px] items-center justify-center bg-[#b5b3b0]"><div className="h-2 w-px bg-black" /></div>
              </div>
              <div className="flex h-[21px] items-start">
                <div className="flex h-[21px] items-center gap-[10px] pl-[12px]">
                  <NavTri d="M1 1h1v10H1zM8 1v10L2.500 6z" />
                  <NavTri d="M8 1v10L2 6z" />
                  <NavTri d="M2 1v10l6-5z" />
                  <NavTri d="M2 1v10l5.500-5zM8 1h1v10H8z" />
                </div>
                <svg className="mt-[5px] ml-[18px]" width="12" height="12" viewBox="0 0 12 12"><path d="M4 0h4v4h4v4H8v4H4V8H0V4h4z" fill="#454545" /></svg>
                <div className="ml-[10px] flex h-[21px] w-[65px] items-center justify-center border-r border-b border-l border-[#908e8b] bg-white pt-px pr-[2px] text-[12px] font-bold tracking-[-0.2px]">Sheet1</div>
              </div>
            </div>
            <Sidebar />
          </div>
          <div className="flex h-[21px] shrink-0 items-center border-t border-[#b0aeab] text-[12px] whitespace-nowrap">
            <div className="w-[197px] pt-px pl-[10px]">Sheet 1 of 1</div>
            <Divider />
            <div className="w-[325px]" />
            <Divider />
            <div className="w-[178px] pt-px pl-[8px]">Default</div>
            <Divider />
            <div className="w-[67px]" />
            <Divider />
            <div className="flex w-[28px] justify-center"><svg width="14" height="12" viewBox="0 0 14 12" fill="none"><path d="M1 3h9v6H1z" fill="#8f8d8a" /><path d="M10 1.500h3M11.500 2v8M10 10.500h3" stroke="#999" /></svg></div>
            <Divider />
            <div className="flex w-[28px] justify-center pl-[3px]"><svg width="12" height="12" viewBox="0 0 12 12" fill="none"><path d="M9.500 2.500V1.500h-8v9h8v-2" stroke="#999" /><path d="M6.500 4l4 3M10.500 4l-4 3M8.500 3v5" stroke="#b8161c" strokeWidth="1" /></svg></div>
            <Divider />
            <div className="w-[28px]" />
            <Divider />
            <div className="w-[251px] pt-px pl-[3px] text-center tracking-[-0.1px]">Average: ; Sum: 0</div>
            <Divider />
            <svg width="142" height="16" viewBox="0 0 142 16"><path d="M10 8.500h8M127 8.500h9M131.500 4v9" stroke="#888" strokeWidth="2" /><path d="M24 8.500h97M72 4v9" stroke="#aaa" strokeWidth="2" /><circle cx="54" cy="8.500" r="3.500" fill="#fff" stroke="#888" strokeWidth="1.200" /></svg>
            <Divider />
            <div className="pt-px pl-[11px]">71%</div>
          </div>
        </div>
      </div>
    </div>
  );
}
